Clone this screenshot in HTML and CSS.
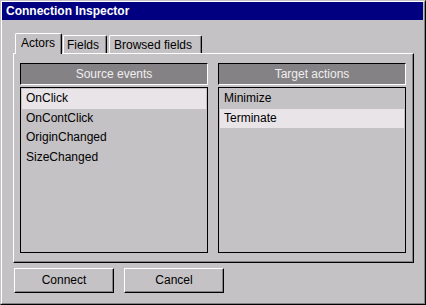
FILE: index.html
```html
<!DOCTYPE html>
<html>
<head>
<meta charset="utf-8">
<link rel="stylesheet" href="styles.css">
</head>
<body>
<div class="window">
  <div class="frame">
    <div class="titlebar">Connection Inspector</div>
    <div class="content">
      <div class="tabs">
        <div class="tab tab-active tab-actors">Actors</div>
        <div class="tab tab-fields">Fields</div>
        <div class="tab tab-browsed">Browsed fields</div>
      </div>
      <div class="panel">
        <div class="column">
          <div class="header">Source events</div>
          <div class="list">
            <div class="item selected">OnClick</div>
            <div class="item">OnContClick</div>
            <div class="item">OriginChanged</div>
            <div class="item">SizeChanged</div>
          </div>
        </div>
        <div class="column">
          <div class="header">Target actions</div>
          <div class="list">
            <div class="item">Minimize</div>
            <div class="item selected">Terminate</div>
          </div>
        </div>
      </div>
      <div class="buttons">
        <div class="button">Connect</div>
        <div class="button">Cancel</div>
      </div>
    </div>
  </div>
</div>
</body>
</html>
```
FILE: styles.css
```css
html, body {
  margin: 0;
  padding: 0;
  background: #c5c2c5;
}
body {
  font-family: "Liberation Sans", Arial, sans-serif;
  font-size: 12px;
  color: #000;
}
.window {
  width: 426px;
  height: 305px;
  box-sizing: border-box;
  border: 1px solid;
  border-color: #c5c2c5 #000 #000 #c5c2c5;
  background: #c5c2c5;
}
.frame {
  height: 100%;
  box-sizing: border-box;
  border: 1px solid;
  border-color: #fff #848284 #848284 #fff;
  display: flex;
  flex-direction: column;
}
.titlebar {
  height: 18px;
  margin-right: 1px;
  background: #000080;
  color: #fff;
  font-weight: bold;
  font-size: 12px;
  line-height: 18px;
  padding-left: 4px;
}
.content {
  padding: 13px 10px 0 11px;
}
.tabs {
  display: flex;
  align-items: flex-end;
  height: 20px;
  padding-left: 2px;
}
.tab {
  box-sizing: border-box;
  height: 18px;
  border-top: 1px solid #fff;
  border-left: 1px solid #fff;
  border-right: 1px solid #000;
  border-top-left-radius: 2px;
  border-top-right-radius: 2px;
  box-shadow: inset -1px 0 0 #848284;
  line-height: 18px;
  white-space: nowrap;
}
.tab-active {
  height: 21px;
  margin-bottom: -1px;
  position: relative;
  z-index: 1;
  background: #c5c2c5;
  line-height: 18px;
}
.tab-actors {
  width: 47px;
  padding-left: 5px;
}
.tab-fields {
  width: 44px;
  padding-left: 3px;
  margin-left: 1px;
}
.tab-browsed {
  width: 93px;
  padding-left: 4px;
  margin-left: 2px;
}
.panel {
  box-sizing: border-box;
  width: 401px;
  height: 210px;
  border: 1px solid;
  border-color: #fff #000 #000 #fff;
  box-shadow: inset -1px -1px 0 #848284;
  display: grid;
  grid-template-columns: 188px 188px;
  column-gap: 10px;
  padding: 9px 0 0 6px;
  align-content: start;
}
.column {
  display: flex;
  flex-direction: column;
}
.header {
  box-sizing: border-box;
  height: 22px;
  border: 1px solid;
  border-color: #000 #fff #fff #000;
  background: #858285;
  color: #f0eef0;
  text-align: center;
  line-height: 20px;
}
.list {
  box-sizing: border-box;
  margin-top: 2px;
  height: 166px;
  border: 1px solid #000;
  padding: 1px;
}
.item {
  height: 19.5px;
  line-height: 19.5px;
  padding-left: 4px;
}
.item.selected {
  background: #e8e4e8;
}
.buttons {
  display: flex;
  gap: 10px;
  margin-top: 5px;
  padding-left: 1px;
}
.button {
  box-sizing: border-box;
  width: 100px;
  height: 25px;
  border: 1px solid;
  border-color: #fff #000 #000 #fff;
  box-shadow: inset -1px -1px 0 #848284;
  text-align: center;
  line-height: 23px;
}
```
